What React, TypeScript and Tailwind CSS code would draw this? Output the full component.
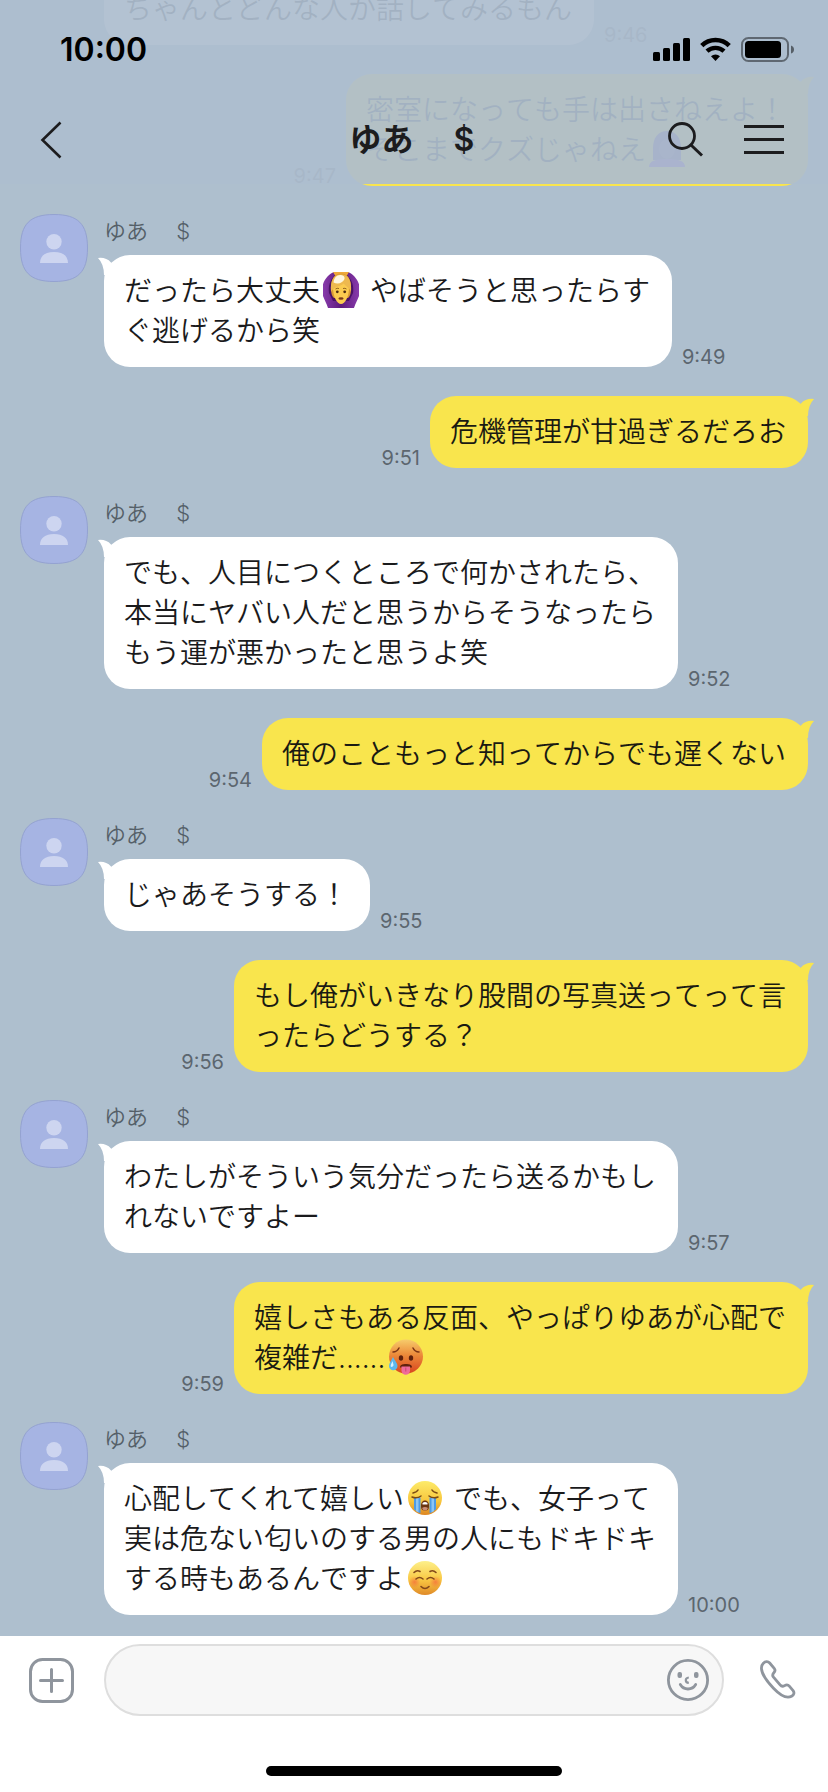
import React from 'react';

type Message = {
  from: 'them' | 'me';
  time: string;
  lines: React.ReactNode[];
};

const svgEmoji = 'mx-[3px] inline-block size-9 align-[-7px]';

function OkWomanEmoji() {
  return (
    <svg viewBox="0 0 36 36" className={svgEmoji} role="img" aria-label="OKのポーズをする女性">
      <defs>
        <linearGradient id="okSleeve" x1="0" y1="0" x2="1" y2="0">
          <stop offset="0" stopColor="#8a3cae" />
          <stop offset="0.5" stopColor="#5d1b7c" />
          <stop offset="1" stopColor="#8a3cae" />
        </linearGradient>
      </defs>
      <path d="M11 0C5 2-1 10-1 18c0 7 4 11 6 18h26c2-7 6-11 6-18 0-8-6-16-12-18Z" fill="url(#okSleeve)" />
      <path d="M12 3C7 8 5 14 6 21l4 8h16l4-8c1-7-1-13-6-18Z" fill="#4a1166" />
      <path d="M10 0h16l-3 5H13Z" fill="#f0a93a" />
      <path d="M18 1.500C10.500 1.500 8 8 8 16c0 6 1 8 3 10h14c2-2 3-4 3-10 0-8-2.500-14.500-10-14.500Z" fill="#d99a34" />
      <path d="M10 15c0 10 4 17 8 17s8-7 8-17c-1-3-4-6-8-6s-7 3-8 6Z" fill="#fbcb50" />
      <path d="M8 20C7 8 11 2.500 18 2.500S29 8 28 20c-1-4-5-5.500-7.500-8.500C17 15 10.500 14.500 8 20Z" fill="#eeb94f" />
      <path d="M10.500 10.500c.5-5 3.500-8 7.500-7.500 2.500.3 4 2 3.500 4-2 4-6.500 6-11 3.500Z" fill="#fff6df" />
      <path d="M12.500 17q1.500-1.200 3.500-.5M20 16.500q2-.7 3.500.5" stroke="#8a5a1c" strokeWidth="0.900" fill="none" />
      <circle cx="14.300" cy="19.800" r="1.400" fill="#4a2a12" />
      <circle cx="21.700" cy="19.800" r="1.400" fill="#4a2a12" />
      <ellipse cx="18" cy="26.500" rx="2.600" ry="1.300" fill="#7a3a1a" />
    </svg>
  );
}

function BowingWomanEmoji() {
  return (
    <svg viewBox="0 0 36 36" className={svgEmoji} role="img" aria-label="女性">
      <path d="M18 0C9 0 4 7 4 17v12h28V17C32 7 27 0 18 0Z" fill="#5a2d8e" />
      <path d="M0 36c0-6 6-8 18-8s18 2 18 8Z" fill="#7b2fc0" />
      <ellipse cx="18" cy="18" rx="8" ry="10" fill="#6f4f9a" />
    </svg>
  );
}

function HotFaceEmoji() {
  return (
    <svg viewBox="0 0 36 36" className={svgEmoji} role="img" aria-label="暑い顔">
      <defs>
        <linearGradient id="hotFace" x1="0" y1="0" x2="0" y2="1">
          <stop offset="0" stopColor="#f7cc6b" />
          <stop offset="0.450" stopColor="#ec8a3a" />
          <stop offset="1" stopColor="#d8451f" />
        </linearGradient>
      </defs>
      <circle cx="18" cy="17.500" r="17" fill="url(#hotFace)" />
      <path d="M5 13q4 0 6-4M31 13q-4 0-6-4" stroke="#7a3214" strokeWidth="1.500" fill="none" strokeLinecap="round" />
      <ellipse cx="13" cy="19" rx="2.200" ry="2.800" fill="#5f210d" />
      <ellipse cx="23" cy="19" rx="2.200" ry="2.800" fill="#5f210d" />
      <path d="M12 28.500c0-3 3-3.500 6-3.500s6 .5 6 3.500Z" fill="#5f210d" />
      <path d="M13.500 27.500H22v4a4.200 4.200 0 0 1-8.500 0Z" fill="#ef6a9a" />
      <path d="M17.800 28.500v4" stroke="#c94375" strokeWidth="1" />
      <path d="M5 18c2 4 4.500 6 4.500 9a4.200 4.200 0 0 1-8.500 0c0-3 2-5 4-9Z" fill="#5cb8ee" />
      <path d="M4.500 22c-1 2.500-2 3.500-1.800 5.500.8 1 2.800.3 2.800-1.700Z" fill="#d5f0ff" />
    </svg>
  );
}

function CryingEmoji() {
  return (
    <svg viewBox="0 0 36 36" className={svgEmoji} role="img" aria-label="大泣き">
      <defs>
        <linearGradient id="cryFace" x1="0" y1="0" x2="0" y2="1">
          <stop offset="0" stopColor="#fdeb6a" />
          <stop offset="0.600" stopColor="#f8c63c" />
          <stop offset="1" stopColor="#dd8622" />
        </linearGradient>
      </defs>
      <circle cx="18" cy="18" r="17" fill="url(#cryFace)" />
      <path d="M7 17.500h6.500v15.800q-4-1.500-6.500-4ZM22.500 17.500H29v11.800q-2.500 2.500-6.500 4Z" fill="#4d9be6" />
      <path d="M9 17.500h2.500v15L9 31ZM24.500 17.500H27V31l-2.500 1.500Z" fill="#8cc5f5" />
      <path d="M6 13q4-1 5-3M30 13q-4-1-5-3M5 17q5 2 9-1M31 17q-5 2-9-1" stroke="#7a4a14" strokeWidth="1.500" fill="none" strokeLinecap="round" />
      <path d="M14 26c0-4 2-5.500 4-5.500s4 1.500 4 5.500-2 4.500-4 4.500-4-.5-4-4.500Z" fill="#6b3510" />
      <path d="M15.500 23q2.500-2 5 0v1.500h-5Z" fill="#fff" />
      <path d="M15 28q3-2 6 0-1 2.500-3 2.500t-3-2.500Z" fill="#c98c74" />
    </svg>
  );
}

function SmilingEmoji() {
  return (
    <svg viewBox="0 0 36 36" className={svgEmoji} role="img" aria-label="ほほえみ">
      <defs>
        <linearGradient id="smileFace" x1="0" y1="0" x2="0" y2="1">
          <stop offset="0" stopColor="#fdf08a" />
          <stop offset="0.550" stopColor="#f9c843" />
          <stop offset="1" stopColor="#e08a28" />
        </linearGradient>
        <radialGradient id="blush">
          <stop offset="0" stopColor="#f4663a" stopOpacity="0.700" />
          <stop offset="1" stopColor="#f4663a" stopOpacity="0" />
        </radialGradient>
      </defs>
      <circle cx="18" cy="18" r="17" fill="url(#smileFace)" />
      <circle cx="7.500" cy="22" r="6" fill="url(#blush)" />
      <circle cx="28.500" cy="22" r="6" fill="url(#blush)" />
      <path d="M7 12.500q3-3 6-1M29 12.500q-3-3-6-1M9 19q3.500-3 7 0M20 19q3.500-3 7 0M14 26.500q4 4 8 0" stroke="#83491a" strokeWidth="1.600" fill="none" strokeLinecap="round" />
    </svg>
  );
}

const messages: Message[] = [
  { from: 'them', time: '9:46', lines: ['ちゃんとどんな人か話してみるもん'] },
  {
    from: 'me',
    time: '9:47',
    lines: [
      '密室になっても手は出さねえよ！',
      <>
        そこまでクズじゃねえ
        <BowingWomanEmoji />
      </>,
    ],
  },
  {
    from: 'them',
    time: '9:49',
    lines: [
      <>
        だったら大丈夫
        <OkWomanEmoji />
        {' やばそうと思ったらす'}
      </>,
      'ぐ逃げるから笑',
    ],
  },
  { from: 'me', time: '9:51', lines: ['危機管理が甘過ぎるだろお'] },
  {
    from: 'them',
    time: '9:52',
    lines: ['でも、人目につくところで何かされたら、', '本当にヤバい人だと思うからそうなったら', 'もう運が悪かったと思うよ笑'],
  },
  { from: 'me', time: '9:54', lines: ['俺のこともっと知ってからでも遅くない'] },
  { from: 'them', time: '9:55', lines: ['じゃあそうする！'] },
  { from: 'me', time: '9:56', lines: ['もし俺がいきなり股間の写真送ってって言', 'ったらどうする？'] },
  { from: 'them', time: '9:57', lines: ['わたしがそういう気分だったら送るかもし', 'れないですよー'] },
  {
    from: 'me',
    time: '9:59',
    lines: [
      '嬉しさもある反面、やっぱりゆあが心配で',
      <>
        複雑だ......
        <HotFaceEmoji />
      </>,
    ],
  },
  {
    from: 'them',
    time: '10:00',
    lines: [
      <>
        心配してくれて嬉しい
        <CryingEmoji />
        {' でも、女子って'}
      </>,
      '実は危ない匂いのする男の人にもドキドキ',
      <>
        する時もあるんですよ
        <SmilingEmoji />
      </>,
    ],
  },
];

function Avatar() {
  return (
    <svg viewBox="0 0 68 68" className="size-[68px] shrink-0" aria-hidden="true">
      <path
        d="M34 .5C58 .5 67.500 10 67.500 34S58 67.500 34 67.500.5 58 .5 34 10 .5 34 .5Z"
        fill="#a6b4e3"
        stroke="#94a2d0"
      />
      <circle cx="34" cy="27.700" r="7.700" fill="#cdd5f0" />
      <path d="M20 49c0-7 5-11 14-11s14 4 14 11Z" fill="#cdd5f0" />
    </svg>
  );
}

function Time({ children }: { children: string }) {
  return <time className="shrink-0 text-[20px] leading-5 text-[#5c666f]">{children}</time>;
}

function Lines({ lines }: { lines: React.ReactNode[] }) {
  return (
    <p className="text-[28px] leading-10 font-[350] whitespace-pre-wrap [font-kerning:none]">
      {lines.map((line, i) => (
        <span key={i} className="block">
          {line}
        </span>
      ))}
    </p>
  );
}

function TheirMessage({ time, lines }: Message) {
  return (
    <li className="flex gap-4 pl-5">
      <Avatar />
      <div className="min-w-0">
        <p className="h-[41px] pt-[5px] text-[22px] leading-6 font-[350] text-[#555f68]">ゆあ　 $</p>
        <div className="flex items-end gap-[10px]">
          <div className="relative rounded-[26px] bg-white py-4 pr-[22px] pl-5 text-[#1a1a1c]">
            <svg viewBox="0 0 20 20" className="absolute top-0 -left-[6px] size-5" aria-hidden="true">
              <path d="M0 3Q8 2 13 7.500L14 20H6Q6 9 0 3Z" fill="#fff" />
            </svg>
            <Lines lines={lines} />
          </div>
          <Time>{time}</Time>
        </div>
      </div>
    </li>
  );
}

function MyMessage({ time, lines }: Message) {
  return (
    <li className="mt-[29px] mb-7 flex items-end justify-end gap-[10px] pr-5">
      <Time>{time}</Time>
      <div className="relative rounded-[26px] bg-[#f9e54d] py-4 pr-[22px] pl-5 text-[#1a1a12]">
        <svg viewBox="0 0 20 20" className="absolute top-0 -right-[6px] size-5" aria-hidden="true">
          <path d="M20 3Q12 2 7 7.500L6 20H14Q14 9 20 3Z" fill="#f9e54d" />
        </svg>
        <Lines lines={lines} />
      </div>
    </li>
  );
}

function StatusIcons() {
  return (
    <svg viewBox="0 0 142 26" className="h-[26px] w-[142px]" aria-hidden="true">
      <rect x="0" y="15" width="7" height="9" rx="1.500" />
      <rect x="10" y="11" width="7" height="13" rx="1.500" />
      <rect x="20" y="6" width="7" height="18" rx="1.500" />
      <rect x="30" y="1" width="7" height="23" rx="1.500" />
      <path d="M48.800 8.600a19.500 19.500 0 0 1 27.400 0" fill="none" stroke="#000" strokeWidth="4.600" />
      <path d="M54 14.200a12.500 12.500 0 0 1 17 0" fill="none" stroke="#000" strokeWidth="4.400" />
      <path d="M58 19.300a6.500 6.500 0 0 1 9 0L62.500 24Z" />
      <rect x="89" y="1" width="46" height="23" rx="6.500" fill="none" stroke="#000" strokeOpacity="0.450" strokeWidth="2" />
      <rect x="92" y="4" width="36" height="17" rx="3.500" />
      <path d="M138 8.500q3 1 3 4t-3 4Z" fillOpacity="0.500" />
    </svg>
  );
}

function Header() {
  return (
    <header className="absolute inset-x-0 top-0 z-10 h-[184px] bg-[#adbdcf]/93">
      <div className="flex h-[88px] items-center justify-between pt-3 pr-[33px] pl-[60px]">
        <span className="text-[32px] leading-8 font-semibold text-black">10:00</span>
        <StatusIcons />
      </div>
      <div className="grid h-24 grid-cols-[1fr_auto_1fr] items-center pt-2 pr-11 pl-10 text-[#1c1c1e]">
        <button type="button" aria-label="戻る" className="justify-self-start">
          <svg viewBox="0 0 24 40" className="h-10 w-6" fill="none" stroke="currentColor" strokeWidth="2.600">
            <path d="M20.500 2.500 2.500 20l18 17.500" />
          </svg>
        </button>
        <h1 className="text-[32px] leading-10 font-semibold [font-kerning:none]">ゆあ　 $</h1>
        <div className="flex items-center gap-[38px] justify-self-end">
          <button type="button" aria-label="検索">
            <svg viewBox="0 0 40 40" className="size-10" fill="none" stroke="currentColor">
              <circle cx="16" cy="16" r="12.500" strokeWidth="2.800" />
              <path d="m25 25 11 10.500" strokeWidth="3" />
            </svg>
          </button>
          <button type="button" aria-label="メニュー">
            <svg viewBox="0 0 40 40" className="size-10" fill="none" stroke="currentColor" strokeWidth="2.800">
              <path d="M0 6.500h40M0 19.500h40M0 32.500h40" />
            </svg>
          </button>
        </div>
      </div>
    </header>
  );
}

function Composer() {
  return (
    <footer className="bg-white pb-4">
      <form className="flex items-center pt-2 pr-[31px] pl-[29px]" onSubmit={(e) => e.preventDefault()}>
        <button type="button" aria-label="追加" className="text-[#8f959d]">
          <svg viewBox="0 0 45 45" className="size-[45px]" fill="none" stroke="currentColor" strokeWidth="3">
            <rect x="1.500" y="1.500" width="42" height="42" rx="12" />
            <path d="M22.500 11.500v22M11.500 22.500h22" strokeLinecap="round" />
          </svg>
        </button>
        <div className="ml-[30px] flex h-[72px] min-w-0 flex-1 items-center rounded-full border-2 border-[#dedede] bg-[#f7f7f7] pr-3 pl-6">
          <input type="text" aria-label="メッセージ" className="h-full min-w-0 flex-1 bg-transparent text-[28px] outline-none" />
          <button type="button" aria-label="スタンプ" className="text-[#8f959d]">
            <svg viewBox="0 0 44 44" className="size-11" fill="none" stroke="currentColor" strokeWidth="2.800">
              <circle cx="22" cy="22" r="19.600" />
              <rect x="11.500" y="14" width="4.500" height="6" rx="2" fill="currentColor" stroke="none" />
              <rect x="28" y="14" width="4.500" height="6" rx="2" fill="currentColor" stroke="none" />
              <path d="M22.800 19.500q-3 .3-3 2.700t3 2.700" strokeWidth="2.200" />
              <path d="M14.300 26.500q2.700 4.500 7.700 4.500t7.700-4.500" strokeLinecap="round" />
            </svg>
          </button>
        </div>
        <button type="button" aria-label="通話" className="ml-[35px] text-[#8f959d]">
          <svg viewBox="0 0 38 42" className="h-[42px] w-[38px]" fill="none" stroke="currentColor" strokeWidth="2.800" strokeLinejoin="round">
            <path d="M4.300 4.300C6.300 2 9 2 10.700 4l4.500 5.300c1.500 1.800.8 3.200-.4 4.500-1.500 1.600-1.600 2.700-.3 4.400l6.600 7.700c1.400 1.700 2.700 1.800 4.500.7 1.700-1 3.100-1.300 4.500.3l4 4.700c1.500 2 1 4.300-1.500 5.700-4.600 2.500-11-.5-18.100-8C7.500 21.900 3 15.500 2.500 10c-.2-2.300.3-4.200 1.800-5.700Z" />
          </svg>
        </button>
      </form>
      <div className="mx-auto mt-[50px] h-[10px] w-[296px] rounded-full bg-black" />
    </footer>
  );
}

export default function App() {
  return (
    <div
      lang="ja"
      className="relative flex h-screen flex-col bg-[#aebfce] font-['Inter','Noto_Sans_CJK_JP',sans-serif]"
    >
      <Header />
      <main className="flex min-h-0 flex-1 flex-col justify-end overflow-hidden pb-[21px]">
        <ul>
          {messages.map((m) => (m.from === 'them' ? <TheirMessage key={m.time} {...m} /> : <MyMessage key={m.time} {...m} />))}
        </ul>
      </main>
      <Composer />
    </div>
  );
}
